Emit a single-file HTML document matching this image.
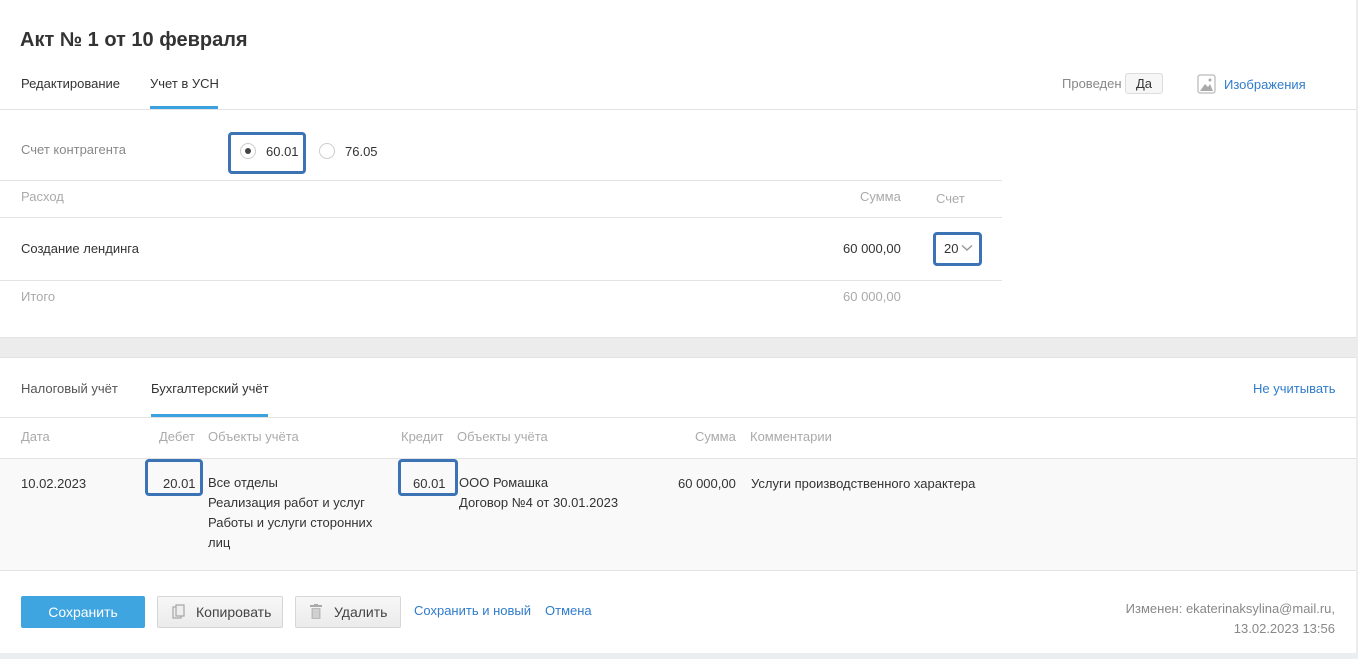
<!DOCTYPE html>
<html><head><meta charset="utf-8"><style>
*{margin:0;padding:0;box-sizing:border-box}
body{width:1358px;height:659px;position:relative;background:#fff;font-family:"Liberation Sans",Arial,sans-serif;font-size:13px;color:#333;overflow:hidden}
.a{position:absolute;white-space:nowrap}
.g{color:#999}
.l{color:#2f7ccb}
.hl{position:absolute;height:1px;background:#e3e3e3}
.box{position:absolute;border:3px solid #3b73b5;border-radius:4px}
.btn{position:absolute;height:32px;border:1px solid #d6d6d6;background:linear-gradient(#f7f7f7,#ebebeb);border-radius:2px;font-size:14px;color:#444;line-height:30px}
</style></head><body>
<div class="a" style="right:0;top:0;width:2px;height:659px;background:#ececec"></div>
<div class="a" style="left:20px;top:29px;font-size:20px;font-weight:bold;color:#333">Акт № 1 от 10 февраля</div>
<div class="a" style="left:21px;top:76px">Редактирование</div>
<div class="a" style="left:150px;top:76px">Учет в УСН</div>
<div class="a" style="left:150px;top:106px;width:68px;height:3px;background:#3ba2e0"></div>
<div class="hl" style="left:0;top:109px;width:1356px"></div>
<div class="a g" style="left:1062px;top:76px;color:#888">Проведен</div>
<div class="a" style="left:1125px;top:73px;width:38px;height:21px;border:1px solid #ddd;border-radius:3px;background:#f6f6f6;text-align:center;line-height:19px">Да</div>
<svg class="a" style="left:1197px;top:74px" width="20" height="20" viewBox="0 0 20 20"><rect x="1" y="1" width="17" height="18" rx="2" fill="#fff" stroke="#aaa"/><path d="M3 17 L8 10 L11 13 L13 10 L16 17Z" fill="#aaa"/><circle cx="13" cy="6" r="1.5" fill="#aaa"/></svg>
<div class="a l" style="left:1224px;top:77px">Изображения</div>

<div class="a g" style="left:21px;top:142px;color:#888">Счет контрагента</div>
<div class="box" style="left:228px;top:132px;width:78px;height:42px"></div>
<div class="a" style="left:240px;top:143px;width:16px;height:16px;border:1px solid #ccc;border-radius:50%;background:#fff"></div>
<div class="a" style="left:245px;top:148px;width:6px;height:6px;border-radius:50%;background:#444"></div>
<div class="a" style="left:266px;top:144px">60.01</div>
<div class="a" style="left:319px;top:143px;width:16px;height:16px;border:1px solid #ccc;border-radius:50%"></div>
<div class="a" style="left:345px;top:144px">76.05</div>

<div class="hl" style="left:0;top:180px;width:1002px"></div>
<div class="a g" style="left:21px;top:189px;color:#aaa">Расход</div>
<div class="a g" style="left:860px;top:189px;color:#aaa">Сумма</div>
<div class="a g" style="left:936px;top:191px;color:#aaa">Счет</div>
<div class="hl" style="left:0;top:217px;width:1002px"></div>
<div class="a" style="left:21px;top:241px">Создание лендинга</div>
<div class="a" style="left:843px;top:241px">60 000,00</div>
<div class="box" style="left:933px;top:232px;width:49px;height:34px"></div>
<div class="a" style="left:944px;top:241px">20</div>
<svg class="a" style="left:961px;top:244px" width="12" height="8" viewBox="0 0 12 8"><path d="M1 1.5 L6 6 L11 1.5" fill="none" stroke="#999" stroke-width="1.5"/></svg>
<div class="hl" style="left:0;top:280px;width:1002px"></div>
<div class="a g" style="left:21px;top:289px;color:#aaa">Итого</div>
<div class="a g" style="left:843px;top:289px;color:#aaa">60 000,00</div>

<div class="a" style="left:0;top:337px;width:1356px;height:21px;background:#ececec;border-top:1px solid #e3e3e3;border-bottom:1px solid #e3e3e3"></div>

<div class="a" style="left:21px;top:381px;color:#555">Налоговый учёт</div>
<div class="a" style="left:151px;top:381px">Бухгалтерский учёт</div>
<div class="a" style="left:151px;top:414px;width:117px;height:3px;background:#3ba2e0"></div>
<div class="a l" style="left:1253px;top:381px">Не учитывать</div>
<div class="hl" style="left:0;top:417px;width:1356px"></div>
<div class="a" style="left:21px;top:429px;color:#aaa">Дата</div>
<div class="a" style="left:159px;top:429px;color:#aaa">Дебет</div>
<div class="a" style="left:208px;top:429px;color:#aaa">Объекты учёта</div>
<div class="a" style="left:401px;top:429px;color:#aaa">Кредит</div>
<div class="a" style="left:457px;top:429px;color:#aaa">Объекты учёта</div>
<div class="a" style="left:695px;top:429px;color:#aaa">Сумма</div>
<div class="a" style="left:750px;top:429px;color:#aaa">Комментарии</div>
<div class="a" style="left:0;top:458px;width:1356px;height:113px;background:#f9f9f9;border-top:1px solid #e3e3e3;border-bottom:1px solid #e3e3e3"></div>
<div class="a" style="left:21px;top:476px">10.02.2023</div>
<div class="box" style="left:145px;top:459px;width:58px;height:37px"></div>
<div class="a" style="left:163px;top:476px">20.01</div>
<div class="a" style="left:208px;top:473px;line-height:20px">Все отделы<br>Реализация работ и услуг<br>Работы и услуги сторонних<br>лиц</div>
<div class="box" style="left:398px;top:459px;width:60px;height:37px"></div>
<div class="a" style="left:413px;top:476px">60.01</div>
<div class="a" style="left:459px;top:473px;line-height:20px">ООО Ромашка<br>Договор №4 от 30.01.2023</div>
<div class="a" style="left:678px;top:476px">60 000,00</div>
<div class="a" style="left:751px;top:476px">Услуги производственного характера</div>

<div class="a" style="left:21px;top:596px;width:124px;height:32px;background:#3ea5e0;border-radius:2px;color:#fff;font-size:14px;text-align:center;line-height:32px">Сохранить</div>
<div class="btn" style="left:157px;top:596px;width:126px">
<svg class="a" style="left:14px;top:7px" width="14" height="16" viewBox="0 0 14 16"><rect x="1" y="3" width="8" height="11" fill="none" stroke="#aaa" stroke-width="1.3"/><rect x="4" y="1" width="8" height="11" fill="#eee" stroke="#aaa" stroke-width="1.3"/></svg>
<span class="a" style="left:38px;top:0">Копировать</span></div>
<div class="btn" style="left:295px;top:596px;width:106px">
<svg class="a" style="left:14px;top:7px" width="12" height="16" viewBox="0 0 12 16"><rect x="0" y="1" width="12" height="2" fill="#aaa"/><rect x="4" y="0" width="4" height="2" fill="#aaa"/><path d="M1.5 4h9v11h-9z" fill="#bbb"/><path d="M4 5v9M6 5v9M8 5v9" stroke="#eee" stroke-width=".8"/></svg>
<span class="a" style="left:38px;top:0">Удалить</span></div>
<div class="a l" style="left:414px;top:603px">Сохранить и новый</div>
<div class="a l" style="left:545px;top:603px">Отмена</div>
<div class="a" style="right:23px;top:599px;color:#888;text-align:right;line-height:20px">Изменен: ekaterinaksylina@mail.ru,<br>13.02.2023 13:56</div>
<div class="a" style="left:0;top:653px;width:1358px;height:6px;background:#ebeef1"></div>
</body></html>
